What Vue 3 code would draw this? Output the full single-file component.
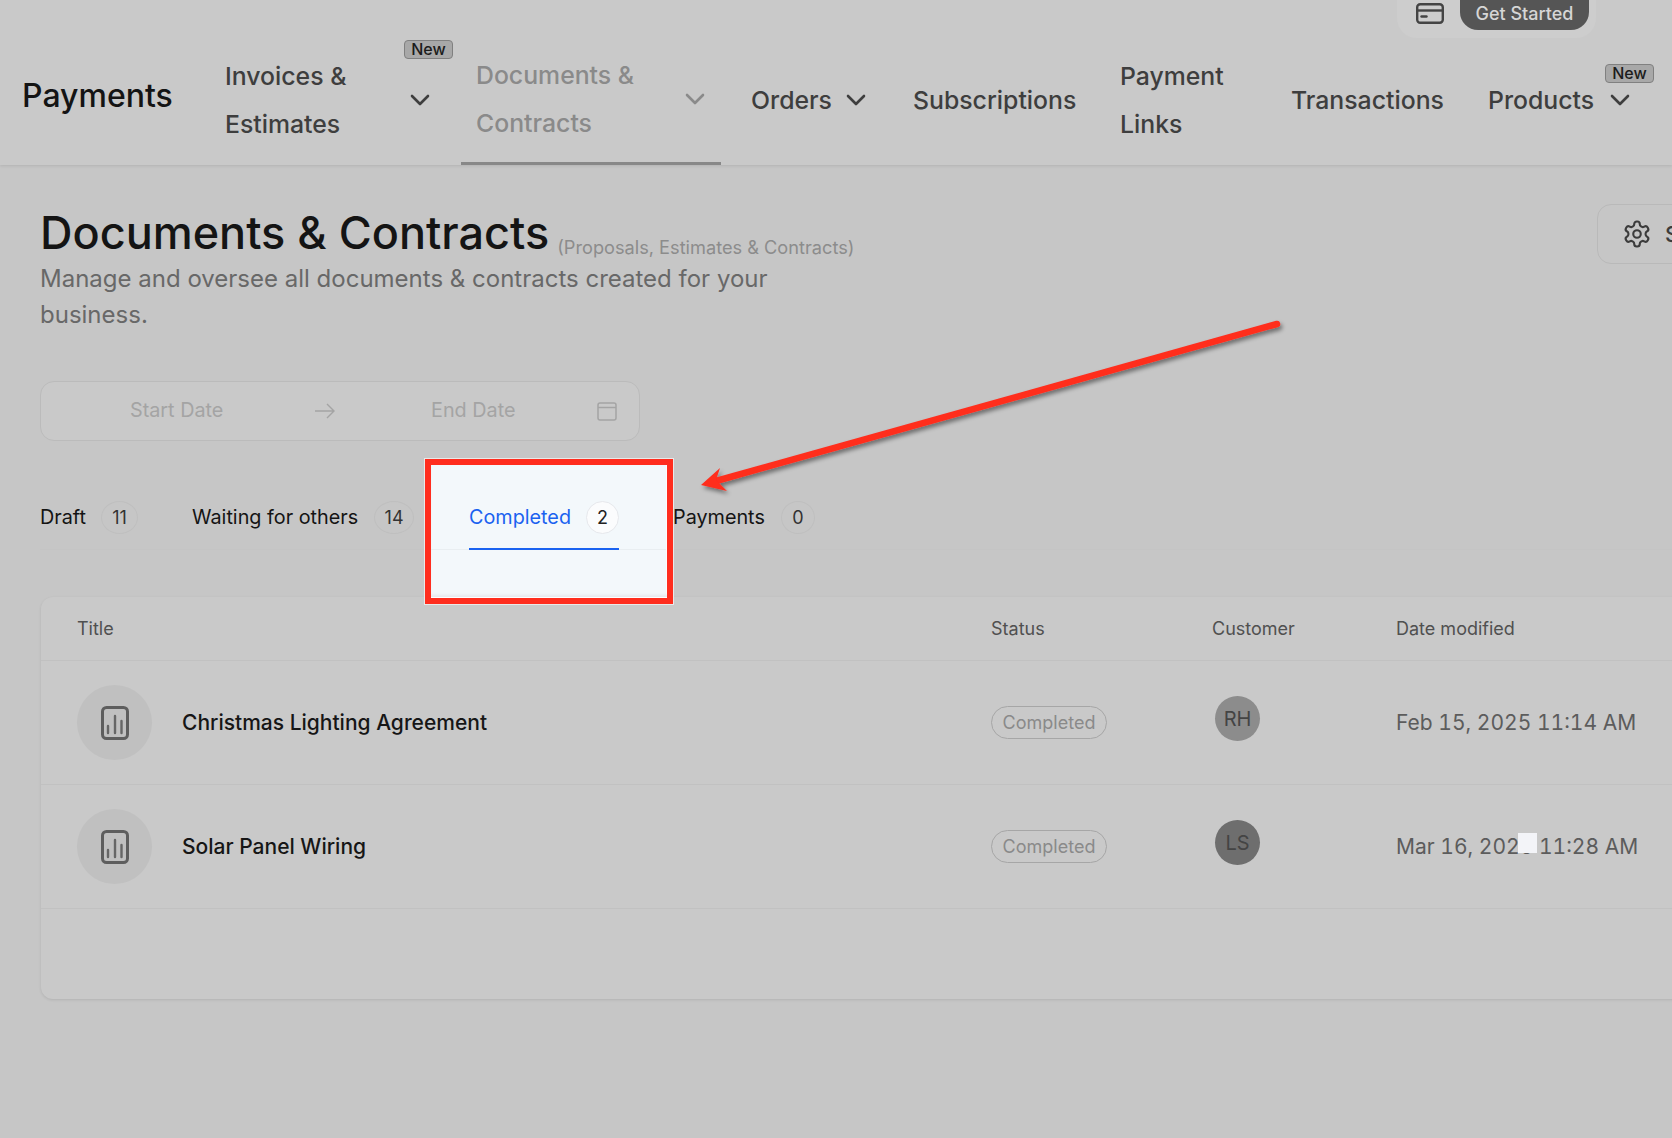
<script setup>
const nav = [
  { label: 'Invoices & Estimates', w: 250, cls: 'two', chev: true, badge: true },
  { label: 'Documents & Contracts', w: 260, cls: 'two active', chev: true },
  { label: 'Orders', w: 162, chev: true, cls: 'orders' },
  { label: 'Subscriptions', w: 207 },
  { label: 'Payment Links', w: 171, cls: 'two narrow' },
  { label: 'Transactions', w: 198 },
  { label: 'Products', w: 172, chev: true, badge: true, cls: 'prod' },
]
const tabs = [
  { label: 'Draft', n: 11, w: 152, bw: 37 },
  { label: 'Waiting for others', n: 14, w: 233, bw: 40 },
  { label: 'Completed', n: 2, w: 248, bw: 33, active: true },
  { label: 'Payments', n: 0, w: 160, bw: 34 },
]
const rows = [
  { title: 'Christmas Lighting Agreement', init: 'RH', tone: 'rh', date: 'Feb 15, 2025 11:14 AM' },
  { title: 'Solar Panel Wiring', init: 'LS', tone: 'ls', date: 'Mar 16, 2025 11:28 AM', mask: true },
]
</script>

<template>
  <div class="page">
    <header class="header">
      <div class="topstrip">
        <div class="toppill">
          <svg class="cardicon" viewBox="0 0 28 21" fill="none" stroke="#444" stroke-width="2.4">
            <rect x="1.2" y="1.2" width="25.6" height="18.6" rx="3" />
            <path d="M1.2 7.5h25.6" />
            <path d="M5.5 13.5h5" stroke-linecap="round" />
          </svg>
          <span class="started">Get Started</span>
        </div>
      </div>
      <nav class="nav">
        <div class="brand">Payments</div>
        <div v-for="n in nav" :key="n.label" class="item" :class="n.cls" :style="{ width: n.w + 'px' }">
          <span class="lab">{{ n.label }}</span>
          <svg v-if="n.chev" class="chev" viewBox="0 0 20 12" fill="none" stroke="currentColor" stroke-width="2.6" stroke-linecap="round" stroke-linejoin="round">
            <path d="M2 2l8 8 8-8" />
          </svg>
          <span v-if="n.badge" class="newb">New</span>
        </div>
      </nav>
    </header>

    <main class="main">
      <div class="head">
        <div>
          <div class="titlerow">
            <h1>Documents &amp; Contracts</h1>
            <span class="sub">(Proposals, Estimates &amp; Contracts)</span>
          </div>
          <p class="desc">Manage and oversee all documents &amp; contracts created for your business.</p>
        </div>
        <button class="settings">
          <svg viewBox="0 0 24 24" width="30" height="30" fill="none" stroke="#3c3c3c" stroke-width="1.7" stroke-linecap="round" stroke-linejoin="round">
            <path d="M12.22 2h-.44a2 2 0 0 0-2 2v.18a2 2 0 0 1-1 1.73l-.43.25a2 2 0 0 1-2 0l-.15-.08a2 2 0 0 0-2.73.73l-.22.38a2 2 0 0 0 .73 2.73l.15.1a2 2 0 0 1 1 1.72v.51a2 2 0 0 1-1 1.74l-.15.09a2 2 0 0 0-.73 2.73l.22.38a2 2 0 0 0 2.73.73l.15-.08a2 2 0 0 1 2 0l.43.25a2 2 0 0 1 1 1.73V20a2 2 0 0 0 2 2h.44a2 2 0 0 0 2-2v-.18a2 2 0 0 1 1-1.73l.43-.25a2 2 0 0 1 2 0l.15.08a2 2 0 0 0 2.73-.73l.22-.39a2 2 0 0 0-.73-2.73l-.15-.08a2 2 0 0 1-1-1.74v-.5a2 2 0 0 1 1-1.74l.15-.09a2 2 0 0 0 .73-2.73l-.22-.38a2 2 0 0 0-2.73-.73l-.15.08a2 2 0 0 1-2 0l-.43-.25a2 2 0 0 1-1-1.73V4a2 2 0 0 0-2-2z" />
            <circle cx="12" cy="12" r="3" />
          </svg>
          <span>Settings</span>
        </button>
      </div>

      <div class="range">
        <span class="ph start">Start Date</span>
        <svg class="arrowi" viewBox="0 0 20 16" fill="none" stroke="#a4a4a4" stroke-width="1.4">
          <path d="M0 8h19M12 1l7 7-7 7" />
        </svg>
        <span class="ph end">End Date</span>
        <svg class="cal" viewBox="0 0 20 20" fill="none" stroke="#a4a4a4" stroke-width="1.5">
          <rect x="1" y="2" width="18" height="17" rx="2" />
          <path d="M1 6.5h18" />
        </svg>
      </div>

      <div class="tabs">
        <div class="spot"></div>
        <div v-for="t in tabs" :key="t.label" class="tab" :class="{ on: t.active }" :style="{ width: t.w + 'px' }">
          <div class="tabin">
            <span class="tablabel">{{ t.label }}</span>
            <span class="count" :style="{ width: t.bw + 'px' }">{{ t.n }}</span>
          </div>
        </div>
      </div>

      <section class="card">
        <div class="grid thead">
          <div>Title</div>
          <div>Status</div>
          <div>Customer</div>
          <div>Date modified</div>
        </div>
        <div v-for="r in rows" :key="r.title" class="grid row">
          <div class="titlecell">
            <span class="docavatar">
              <svg viewBox="0 0 28 34" width="28" height="34" fill="none" stroke="#5e5e5e" stroke-width="3" stroke-linecap="round">
                <rect x="1.5" y="1.5" width="25" height="31" rx="4" />
                <path d="M7 27v-7M14 27V10M20.5 27V15" stroke-width="2.4" stroke="#666" />
              </svg>
            </span>
            <span class="name">{{ r.title }}</span>
          </div>
          <div><span class="pill">Completed</span></div>
          <div><span class="person" :class="r.tone">{{ r.init }}</span></div>
          <div class="date">
            {{ r.date }}
            <span v-if="r.mask" class="mask"></span>
          </div>
        </div>
      </section>
    </main>

    <svg class="annot" width="1672" height="1138" viewBox="0 0 1672 1138">
      <defs>
        <filter id="sh" x="-5%" y="-5%" width="110%" height="110%">
          <feDropShadow dx="2" dy="3" stdDeviation="2" flood-color="#000" flood-opacity="0.45" />
        </filter>
      </defs>
      <g filter="url(#sh)">
        <path d="M1277 324L716 481" stroke="#ff2d1e" stroke-width="6.5" stroke-linecap="round" fill="none" />
        <path d="M701 485L720 468L716 480L727 491Z" fill="#ff2d1e" />
      </g>
    </svg>
  </div>
</template>

<style>
html, body { margin: 0; overflow: hidden; background: #c6c6c6; }
</style>

<style scoped>
.page {
  position: relative;
  width: 1672px;
  height: 1138px;
  overflow: hidden;
  background: #c6c6c6;
  font-family: Inter, "Liberation Sans", sans-serif;
  color: #141414;
}
.header {
  height: 165px;
  background: #c9c9c9;
  box-shadow: 0 1px 3px rgba(0, 0, 0, 0.1);
  display: flex;
  flex-direction: column;
}
.topstrip { height: 38px; display: flex; justify-content: flex-end; padding-right: 76px; }
.toppill {
  width: 199px;
  height: 38px;
  box-sizing: border-box;
  background: #cdcdcd;
  border-radius: 0 0 20px 20px;
  display: flex;
  padding-left: 19px;
  gap: 16px;
}
.cardicon { width: 28px; height: 21px; margin-top: 3px; }
.started {
  width: 129px;
  height: 30px;
  background: #555;
  color: #d6d6d6;
  border-radius: 0 0 18px 18px;
  font-size: 18px;
  font-weight: 500;
  line-height: 28px;
  text-align: center;
}
.nav { flex: 1; display: flex; align-items: stretch; padding-left: 22px; }
.brand {
  width: 189px;
  font-size: 32px;
  font-weight: 500;
  align-self: center;
  margin-bottom: 12px;
}
.item {
  position: relative;
  box-sizing: border-box;
  padding: 0 16px 4px 15px;
  display: flex;
  align-items: center;
  justify-content: space-between;
  font-size: 24.8px;
  font-weight: 500;
  line-height: 48px;
  color: #3e3e3e;
  white-space: nowrap;
}
.item.two .lab { width: 176px; white-space: normal; }
.item.narrow .lab { width: 110px; }
.item:nth-child(2), .item.prod { padding-left: 14px; }
.item.active {
  color: #8a8a8a;
  border-bottom: 3px solid #888;
  padding: 0 16px 2px 15px;
}
.item.orders { margin-left: 15px; }
.item .chev { width: 20px; height: 12px; flex: none; margin-right: 15px; }
.item.active .chev { margin-right: 0; }
.item.prod .chev { margin-right: 0; }
.item.orders .chev { margin-right: 16px; }
.newb {
  position: absolute;
  right: 8px;
  top: 2px;
  width: 49px;
  height: 19px;
  box-sizing: border-box;
  background: #a8a8a8;
  border: 1px solid #808080;
  border-radius: 4px;
  font-size: 16px;
  font-weight: 500;
  line-height: 17px;
  text-align: center;
  color: #1c1c1c;
}
.item.prod .newb { right: -8px; top: 26px; }
.main { padding: 40px 0 0 40px; }
.head { display: flex; justify-content: space-between; align-items: flex-start; }
.titlerow { display: flex; align-items: flex-end; gap: 8px; height: 56px; }
h1 { margin: 0; font-size: 45px; font-weight: 500; line-height: 56px; color: #141414; }
.sub { font-size: 18.2px; line-height: 22px; padding-bottom: 3px; color: #8c8c8c; }
.desc { margin: 0; width: 770px; font-size: 24px; line-height: 36px; color: #686868; }
.settings {
  width: 136px;
  height: 60px;
  margin: -1px -61px 0 0;
  box-sizing: border-box;
  background: transparent;
  border: 1px solid #b9b9b9;
  border-radius: 14px;
  padding: 0 0 0 24px;
  display: flex;
  align-items: center;
  gap: 13px;
  font: 500 22px Inter, sans-serif;
  color: #3c3c3c;
}
.settings svg { flex: none; }
.range {
  margin-top: 48px;
  width: 600px;
  height: 60px;
  box-sizing: border-box;
  border: 1px solid #bbb;
  background: #c9c9c9;
  border-radius: 14px;
  display: flex;
  align-items: center;
  padding: 0 0 2px 89px;
  color: #a4a4a4;
  font-size: 19.8px;
}
.ph { display: inline-block; }
.start { width: 185px; }
.arrowi { width: 20px; height: 16px; flex: none; margin-top: 2px; }
.end { width: 165px; margin-left: 96px; }
.cal { width: 20px; height: 20px; flex: none; margin: 2px 0 0 1px; }
.tabs {
  position: relative;
  margin-top: 60px;
  height: 48px;
  border-bottom: 1px solid #c4c4c4;
  display: flex;
}
.spot {
  position: absolute;
  z-index: 2;
  left: 385px;
  top: -42px;
  width: 248px;
  height: 145px;
  box-sizing: border-box;
  background: linear-gradient(to bottom, transparent 84px, #e9eef1 84px, #e9eef1 85px, transparent 85px), #f3f8fb;
  border: 6px solid #ff2d1e;
  outline: 1px solid #e9e9e9;
  box-shadow: inset 0 -1px 0 #ffffff, inset 0 -4px 3px -1px #e6e8ed, inset -1px 0 0 #ffffff;
}
.tab { flex: none; font-size: 19.8px; position: relative; }
.tab.on { z-index: 3; padding-left: 44px; box-sizing: border-box; color: #1a62f0; }
.tabin { display: inline-flex; align-items: flex-start; gap: 16px; height: 33px; }
.tab.on .tabin, .tab:nth-child(2) .tabin { gap: 15px; }
.tablabel { line-height: 33px; }
.tab.on .tabin { height: 47px; border-bottom: 2px solid #1a62f0; }
.count {
  height: 33px;
  box-sizing: border-box;
  border: 1px solid #bfbfbf;
  border-radius: 50%;
  font-size: 18px;
  line-height: 31px;
  text-align: center;
  color: #333;
}
.tab.on .count { border-color: #e6e8ec; background: #fbfcfd; color: #222; }
.card {
  margin: 47px 0 0 1px;
  width: 1700px;
  height: 402px;
  background: #c9c9c9;
  border-radius: 12px;
  box-shadow: 0 1px 3px rgba(0, 0, 0, 0.1);
}
.grid {
  display: grid;
  grid-template-columns: 914px 221px 184px 1fr;
  padding-left: 36px;
  align-items: center;
  box-sizing: border-box;
  border-bottom: 1px solid #c1c1c1;
}
.thead { height: 64px; font-size: 18px; color: #505050; }
.row { height: 124px; }
.titlecell { display: flex; align-items: center; gap: 30px; }
.docavatar {
  width: 75px;
  height: 75px;
  border-radius: 50%;
  background: #c0c0c0;
  display: flex;
  align-items: center;
  justify-content: center;
}
.name { font-size: 21px; font-weight: 500; color: #161616; }
.pill {
  display: inline-block;
  width: 116px;
  height: 33px;
  box-sizing: border-box;
  border: 1px solid #a6a6a6;
  border-radius: 17px;
  text-align: center;
  font-size: 18px;
  line-height: 31px;
  color: #8a8a8a;
}
.person {
  display: flex;
  width: 45px;
  height: 45px;
  margin: -8px 0 0 3px;
  border-radius: 50%;
  align-items: center;
  justify-content: center;
  font-size: 20px;
  color: #444;
}
.rh { background: #8c8c8c; }
.ls { background: #6e6e6e; }
.date {
  position: relative;
  padding-bottom: 1px;
  font-size: 21px;
  font-variant-numeric: tabular-nums;
  color: #5c5c5c;
  white-space: nowrap;
}
.mask {
  position: absolute;
  left: 122px;
  top: -1px;
  width: 19px;
  height: 20px;
  background: #f3f4f8;
}
.annot { position: absolute; left: 0; top: 0; z-index: 5; pointer-events: none; }
</style>
